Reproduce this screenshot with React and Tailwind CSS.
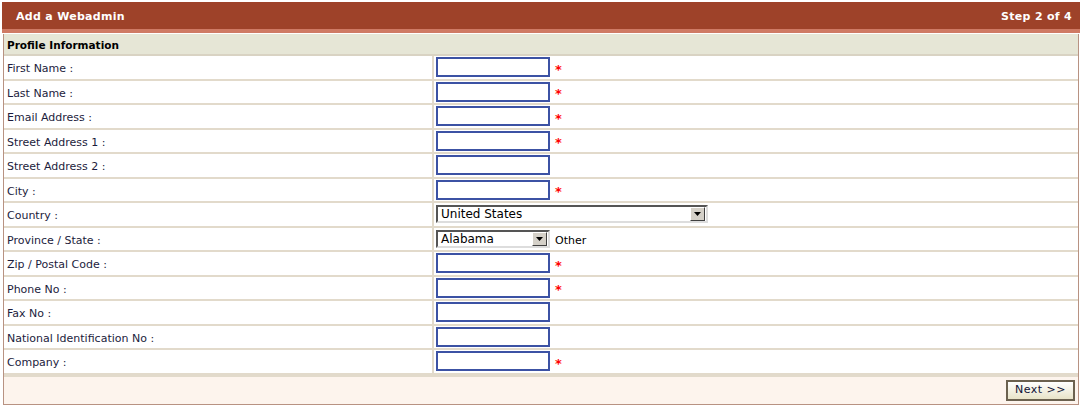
import React from 'react';

const fields = [
  { label: 'First Name :', type: 'text', req: true },
  { label: 'Last Name :', type: 'text', req: true },
  { label: 'Email Address :', type: 'text', req: true },
  { label: 'Street Address 1 :', type: 'text', req: true },
  { label: 'Street Address 2 :', type: 'text' },
  { label: 'City :', type: 'text', req: true },
  { label: 'Country :', type: 'country' },
  { label: 'Province / State :', type: 'province' },
  { label: 'Zip / Postal Code :', type: 'text', req: true },
  { label: 'Phone No :', type: 'text', req: true },
  { label: 'Fax No :', type: 'text' },
  { label: 'National Identification No :', type: 'text' },
  { label: 'Company :', type: 'text', req: true },
];

const Select = ({ value, width }) => (
  <div className={`flex items-center h-[18px] bg-white border-2 border-t-[#555] border-l-[#555] border-b-[#ddd] border-r-[#ddd] ${width}`}>
    <span className="flex-1 pl-[3px] text-[12px] text-black leading-none">{value}</span>
    <span className="w-[15px] h-[14px] mr-[1px] bg-[#d4d0c8] border border-t-white border-l-white border-b-[#404040] border-r-[#404040] flex items-center justify-center">
      <svg width="7" height="4" viewBox="0 0 7 4"><path d="M0 0h7L3.5 4z" fill="#000" /></svg>
    </span>
  </div>
);

const App = () => {
  return (
    <div className="w-[1082px] h-[407px] bg-white pt-[2px] px-[2px]" style={{ fontFamily: '"DejaVu Sans", Verdana, sans-serif' }}>
      <div className="h-[27px] bg-[#9e4229] flex items-center justify-between pl-[14px] pr-[8px] pt-[3px] text-white font-bold text-[11px]" style={{ letterSpacing: '0.3px' }}>
        <span>Add a Webadmin</span>
        <span>Step 2 of 4</span>
      </div>
      <div className="h-[4px] bg-[#cf7a64]" />
      <div className="mx-[1px] mt-[1px] w-[1076px] border border-[#b89282] border-t-0">
        <div className="h-[22px] bg-[#e6e6d6] border-b-2 border-[#d9d3c3] flex items-center pl-[3px] pt-[3px] text-[10.5px] font-bold text-black">
          Profile Information
        </div>
        {fields.map((f, i) => (
          <div key={i} className="grid grid-cols-[430px_1fr] h-[24.5px] border-b-2 border-[#e2dacb] last:border-b-0">
            <div className="flex items-center pl-[3px] pt-[4px] text-[11px] text-[#1c1c3c] border-r-2 border-[#e2dacb]">{f.label}</div>
            <div className="flex items-center pl-[2px]">
              {f.type === 'text' && (
                <input className="w-[114px] h-[20px] border-2 border-[#3c52a4] bg-white outline-none" />
              )}
              {f.type === 'country' && <Select value="United States" width="w-[272px]" />}
              {f.type === 'province' && (
                <>
                  <Select value="Alabama" width="w-[114px]" />
                  <span className="ml-[5px] mt-[4px] text-[11px] text-black">Other</span>
                </>
              )}
              {f.req && <span className="ml-[5px] text-[#ff0000] text-[13px] font-bold leading-none mt-[4px]">*</span>}
            </div>
          </div>
        ))}
        <div className="h-[29px] bg-[#fdf4ed] border-t-2 border-[#e2dacb] flex items-center justify-end pr-[3px]">
          <button className="w-[69px] h-[21px] border-2 border-[#6b614f] bg-gradient-to-b from-white to-[#e8e3c8] text-[11px] text-[#111135]" style={{ letterSpacing: '0.5px' }}>
            Next &gt;&gt;
          </button>
        </div>
      </div>
    </div>
  );
};

export default App;
